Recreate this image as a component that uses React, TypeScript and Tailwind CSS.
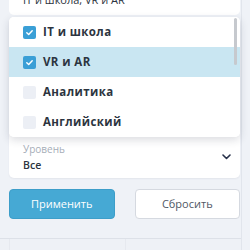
const options = [
  { label: "IT и школа", checked: true, active: false },
  { label: "VR и AR", checked: true, active: true },
  { label: "Аналитика", checked: false, active: false },
  { label: "Английский", checked: false, active: false },
];

function CheckBox({ checked }: { checked: boolean }) {
  if (!checked) {
    return <div className="h-[13px] w-[13px] rounded-[2px] bg-[#eceff5]" />;
  }
  return (
    <div className="flex h-[13px] w-[13px] items-center justify-center rounded-[2px] bg-[#3a9fd6]">
      <svg width="9" height="9" viewBox="0 0 10 10" fill="none">
        <path d="M2 5.2 L4.1 7.2 L8 3" stroke="white" strokeWidth="1.6" strokeLinecap="round" strokeLinejoin="round" />
      </svg>
    </div>
  );
}

export default function App() {
  return (
    <div className="h-[250px] w-[250px] overflow-hidden bg-[#eff2f7] font-['Open_Sans',sans-serif]">
      <div className="flex h-[250px] w-[242px] flex-col border-r border-[#e1e5ec]">
        <div className="flex flex-col pl-[9px] pr-[1px]">
          {/* selected values */}
          <div className="-mt-[12px] flex h-[27px] items-end rounded-b-[5px] bg-white px-[14px] pb-[10px] text-[11px] leading-none text-[#2c3440]">
            IT и школа, VR и AR
          </div>

          <div className="relative mt-[2px]">
            {/* level field */}
            <div className="flex h-[161px] items-end justify-between rounded-[5px] bg-white pb-[5px] pl-[14px] pr-[9px] shadow-[0_1px_2px_rgba(30,40,60,0.06)]">
              <div className="flex flex-col">
                <span className="text-[10px] leading-[15px] text-[#a6adb8]">Уровень</span>
                <span className="text-[10.5px] font-semibold leading-[16px] text-[#2c3440]">Все</span>
              </div>
              <svg className="mb-[13px]" width="9" height="6" viewBox="0 0 9 6" fill="none">
                <path d="M1 1 L4.5 4.5 L8 1" stroke="#27314a" strokeWidth="1.6" strokeLinecap="round" strokeLinejoin="round" />
              </svg>
            </div>

            {/* dropdown list */}
            <div className="absolute left-0 right-0 top-0 h-[120px] overflow-hidden rounded-[5px] bg-white shadow-[0_3px_8px_rgba(30,40,60,0.16)]">
              {options.map((o) => (
                <div
                  key={o.label}
                  className={`flex h-[30px] items-center gap-[7px] pl-[14px] ${o.active ? "bg-[#c9e6f2]" : "bg-white"}`}
                >
                  <CheckBox checked={o.checked} />
                  <span className="text-[11.5px] font-bold tracking-[0.4px] text-[#2c3440]">{o.label}</span>
                </div>
              ))}
              <div className="absolute right-[3px] top-[1px] h-[47px] w-[3px] rounded-full bg-[#c6c9ce]" />
            </div>
          </div>

          {/* buttons */}
          <div className="mt-[11px] flex gap-[20px]">
            <button className="h-[30px] flex-1 rounded-[4px] border border-[#3d9ec9] bg-[#46a9d4] text-[11px] text-white">
              Применить
            </button>
            <button className="h-[30px] flex-1 rounded-[4px] border border-[#d5d9e0] bg-white text-[11px] text-[#4f5864]">
              Сбросить
            </button>
          </div>
        </div>

        <div className="mt-auto flex h-[12px] border-t border-[#dde1e8] bg-[#eef1f6]">
          <div className="ml-[9px] w-[117px] border-l border-r border-[#e6e9ef]" />
        </div>
      </div>
    </div>
  );
}
